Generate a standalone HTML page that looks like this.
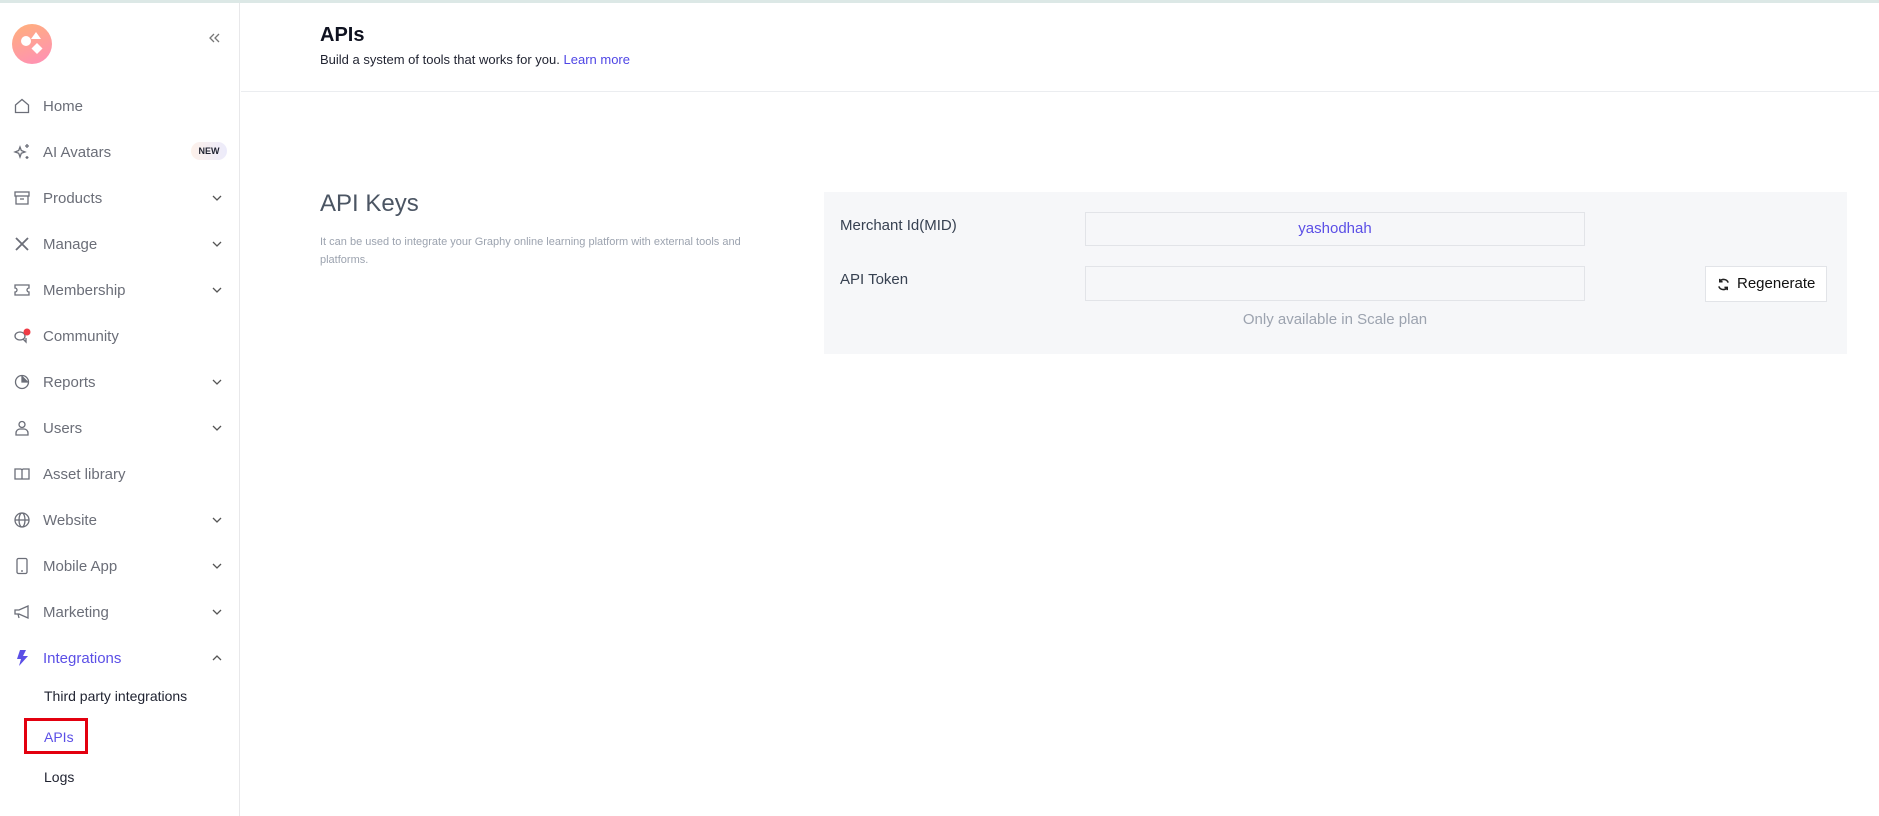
<!DOCTYPE html>
<html><head><meta charset="utf-8"><style>
*{box-sizing:border-box;margin:0;padding:0}
body{width:1879px;height:816px;background:#fff;font-family:"Liberation Sans",sans-serif;position:relative;overflow:hidden}
.top{position:absolute;left:0;top:0;width:1879px;height:3px;background:#dce8e6}
.side{position:absolute;left:0;top:3px;width:240px;height:813px;border-right:1px solid #e8e8ea}
.logo{position:absolute;left:12px;top:21px;width:40px;height:40px;border-radius:50%;background:linear-gradient(160deg,#ffb07a,#ff8fb8)}
.item{position:absolute;left:0;width:240px;height:24px;display:flex;align-items:center;font-size:15px;color:#6b6e78}
.item svg.i{position:absolute;left:13px;width:18px;height:18px}
.item span{position:absolute;left:43px;white-space:nowrap}
.chev{position:absolute;left:210px;width:14px;height:14px}
.sub{position:absolute;left:44px;font-size:14px;color:#1f2230;white-space:nowrap}
.panel{position:absolute;left:824px;top:192px;width:1023px;height:162px;background:#f6f7f9}
.inp{position:absolute;background:#f6f7f9;border:1px solid #e2e4e8}
</style></head><body>
<div class="top"></div>
<div class="side">
 <div class="logo"><svg width="40" height="40" viewBox="0 0 40 40"><circle cx="14" cy="17" r="5" fill="#fff"/><path d="M24 8l5 7h-10z" fill="#fff"/><path d="M25 19l5.5 5.5-5.5 5.5-5.5-5.5z" fill="#fff"/></svg></div>
 <svg style="position:absolute;left:207px;top:28px" width="14" height="14" viewBox="0 0 14 14" fill="none" stroke="#777" stroke-width="1.3"><path d="M7 3L3 7l4 4M12 3L8 7l4 4"/></svg>
</div>
<div style="position:absolute;left:0;top:0">
<div class="item" style="top:94px"><svg class="i" viewBox="0 0 18 18" fill="none" stroke="#6b6e78" stroke-width="1.3"><path d="M2.5 8L9 2.5 15.5 8v7.5h-13z"/></svg><span>Home</span></div>
<div class="item" style="top:140px"><svg class="i" viewBox="0 0 18 18" fill="none" stroke="#6b6e78" stroke-width="1.3"><path d="M7 4l1.3 3.5L12 9l-3.7 1.3L7 14l-1.3-3.7L2 9l3.7-1.5z"/><path d="M14 1v4M12 3h4M14 13v3M12.5 14.5h3"/></svg><span>AI Avatars</span><div style="position:absolute;left:191px;top:2px;width:36px;height:18px;border-radius:9px;background:linear-gradient(90deg,#fdf1ea,#ecebfb);font-size:9px;font-weight:bold;color:#1f2230;text-align:center;line-height:18px">NEW</div></div>
<div class="item" style="top:186px"><svg class="i" viewBox="0 0 18 18" fill="none" stroke="#6b6e78" stroke-width="1.3"><rect x="2" y="3" width="14" height="4"/><path d="M3 7v8h12V7M7 10h4"/></svg><span>Products</span><svg class="chev" viewBox="0 0 14 14" fill="none" stroke="#555" stroke-width="1.3"><path d="M3 5l4 4 4-4"/></svg></div>
<div class="item" style="top:232px"><svg class="i" viewBox="0 0 18 18" fill="none" stroke="#6b6e78" stroke-width="1.8"><path d="M3 3l12 12M15 3L3 15"/></svg><span>Manage</span><svg class="chev" viewBox="0 0 14 14" fill="none" stroke="#555" stroke-width="1.3"><path d="M3 5l4 4 4-4"/></svg></div>
<div class="item" style="top:278px"><svg class="i" viewBox="0 0 18 18" fill="none" stroke="#6b6e78" stroke-width="1.3"><path d="M2 4h14v3a2 2 0 000 4v3H2v-3a2 2 0 000-4z"/></svg><span>Membership</span><svg class="chev" viewBox="0 0 14 14" fill="none" stroke="#555" stroke-width="1.3"><path d="M3 5l4 4 4-4"/></svg></div>
<div class="item" style="top:324px"><svg class="i" viewBox="0 0 18 18" fill="none" stroke="#6b6e78" stroke-width="1.3"><ellipse cx="7" cy="9" rx="5" ry="4"/><path d="M10 12l3 3v-4"/><circle cx="14" cy="5" r="3.5" fill="#ef3b45" stroke="none"/></svg><span>Community</span></div>
<div class="item" style="top:370px"><svg class="i" viewBox="0 0 18 18" fill="none" stroke="#6b6e78" stroke-width="1.3"><circle cx="9" cy="9" r="6.5"/><path d="M9 2.5V9h6.5" fill="#6b6e78"/></svg><span>Reports</span><svg class="chev" viewBox="0 0 14 14" fill="none" stroke="#555" stroke-width="1.3"><path d="M3 5l4 4 4-4"/></svg></div>
<div class="item" style="top:416px"><svg class="i" viewBox="0 0 18 18" fill="none" stroke="#6b6e78" stroke-width="1.3"><circle cx="9" cy="5.5" r="3"/><path d="M3 16v-2a4 4 0 014-4h4a4 4 0 014 4v2z"/></svg><span>Users</span><svg class="chev" viewBox="0 0 14 14" fill="none" stroke="#555" stroke-width="1.3"><path d="M3 5l4 4 4-4"/></svg></div>
<div class="item" style="top:462px"><svg class="i" viewBox="0 0 18 18" fill="none" stroke="#6b6e78" stroke-width="1.3"><path d="M2 4h6l1 1 1-1h6v10H2zM9 5v9"/></svg><span>Asset library</span></div>
<div class="item" style="top:508px"><svg class="i" viewBox="0 0 18 18" fill="none" stroke="#6b6e78" stroke-width="1.3"><circle cx="9" cy="9" r="7"/><ellipse cx="9" cy="9" rx="3" ry="7"/><path d="M2 9h14"/></svg><span>Website</span><svg class="chev" viewBox="0 0 14 14" fill="none" stroke="#555" stroke-width="1.3"><path d="M3 5l4 4 4-4"/></svg></div>
<div class="item" style="top:554px"><svg class="i" viewBox="0 0 18 18" fill="none" stroke="#6b6e78" stroke-width="1.3"><rect x="4" y="1.5" width="10" height="15" rx="1.5"/><path d="M8 14h2"/></svg><span>Mobile App</span><svg class="chev" viewBox="0 0 14 14" fill="none" stroke="#555" stroke-width="1.3"><path d="M3 5l4 4 4-4"/></svg></div>
<div class="item" style="top:600px"><svg class="i" viewBox="0 0 18 18" fill="none" stroke="#6b6e78" stroke-width="1.3"><path d="M2 7h4l9-4v12l-9-4H2zM5 11l1 4"/></svg><span>Marketing</span><svg class="chev" viewBox="0 0 14 14" fill="none" stroke="#555" stroke-width="1.3"><path d="M3 5l4 4 4-4"/></svg></div>
<div class="item" style="top:646px;color:#5b4fe6"><svg class="i" viewBox="0 0 18 18"><path d="M7 1h6l-3 6h5L6 17l2-7H4z" fill="#5b4fe6"/></svg><span>Integrations</span><svg class="chev" viewBox="0 0 14 14" fill="none" stroke="#555" stroke-width="1.3"><path d="M3 9l4-4 4 4"/></svg></div>
<div class="sub" style="top:688px">Third party integrations</div>
<div style="position:absolute;left:24px;top:718px;width:64px;height:36px;border:3px solid #e3000f"></div>
<div class="sub" style="top:729px;color:#5b4fe6">APIs</div>
<div class="sub" style="top:769px">Logs</div>
</div>
<div style="position:absolute;left:241px;top:3px;width:1638px;height:89px;border-bottom:1px solid #ebedf0"></div>
<div style="position:absolute;left:320px;top:24px;font-size:20px;font-weight:bold;color:#0f1220">APIs</div>
<div style="position:absolute;left:320px;top:52px;font-size:13px;color:#1f2230">Build a system of tools that works for you. <span style="color:#4f46e5">Learn more</span></div>
<div style="position:absolute;left:320px;top:190px;font-size:24px;color:#4b5563">API Keys</div>
<div style="position:absolute;left:320px;top:233px;width:470px;font-size:11px;line-height:18px;color:#9ca3af">It can be used to integrate your Graphy online learning platform with external tools and platforms.</div>
<div class="panel"></div>
<div style="position:absolute;left:840px;top:217px;font-size:15px;color:#374151">Merchant Id(MID)</div>
<div class="inp" style="left:1085px;top:212px;width:500px;height:34px;text-align:center;line-height:32px;font-size:15px;color:#5b4fe6">yashodhah</div>
<div style="position:absolute;left:840px;top:271px;font-size:15px;color:#374151">API Token</div>
<div class="inp" style="left:1085px;top:266px;width:500px;height:35px"></div>
<div style="position:absolute;left:1085px;top:311px;width:500px;text-align:center;font-size:15px;color:#9ca3af">Only available in Scale plan</div>
<div style="position:absolute;left:1705px;top:266px;width:122px;height:36px;background:#fff;border:1px solid #e2e4e8;font-size:15px;color:#111;line-height:34px;padding-left:31px">Regenerate<svg style="position:absolute;left:10px;top:10px" width="15" height="15" viewBox="0 0 16 16" fill="none" stroke="#222" stroke-width="1.6"><path d="M13 6a5 5 0 00-9-1M3 10a5 5 0 009 1"/><path d="M4 2v3h3M12 14v-3H9"/></svg></div>
</body></html>
